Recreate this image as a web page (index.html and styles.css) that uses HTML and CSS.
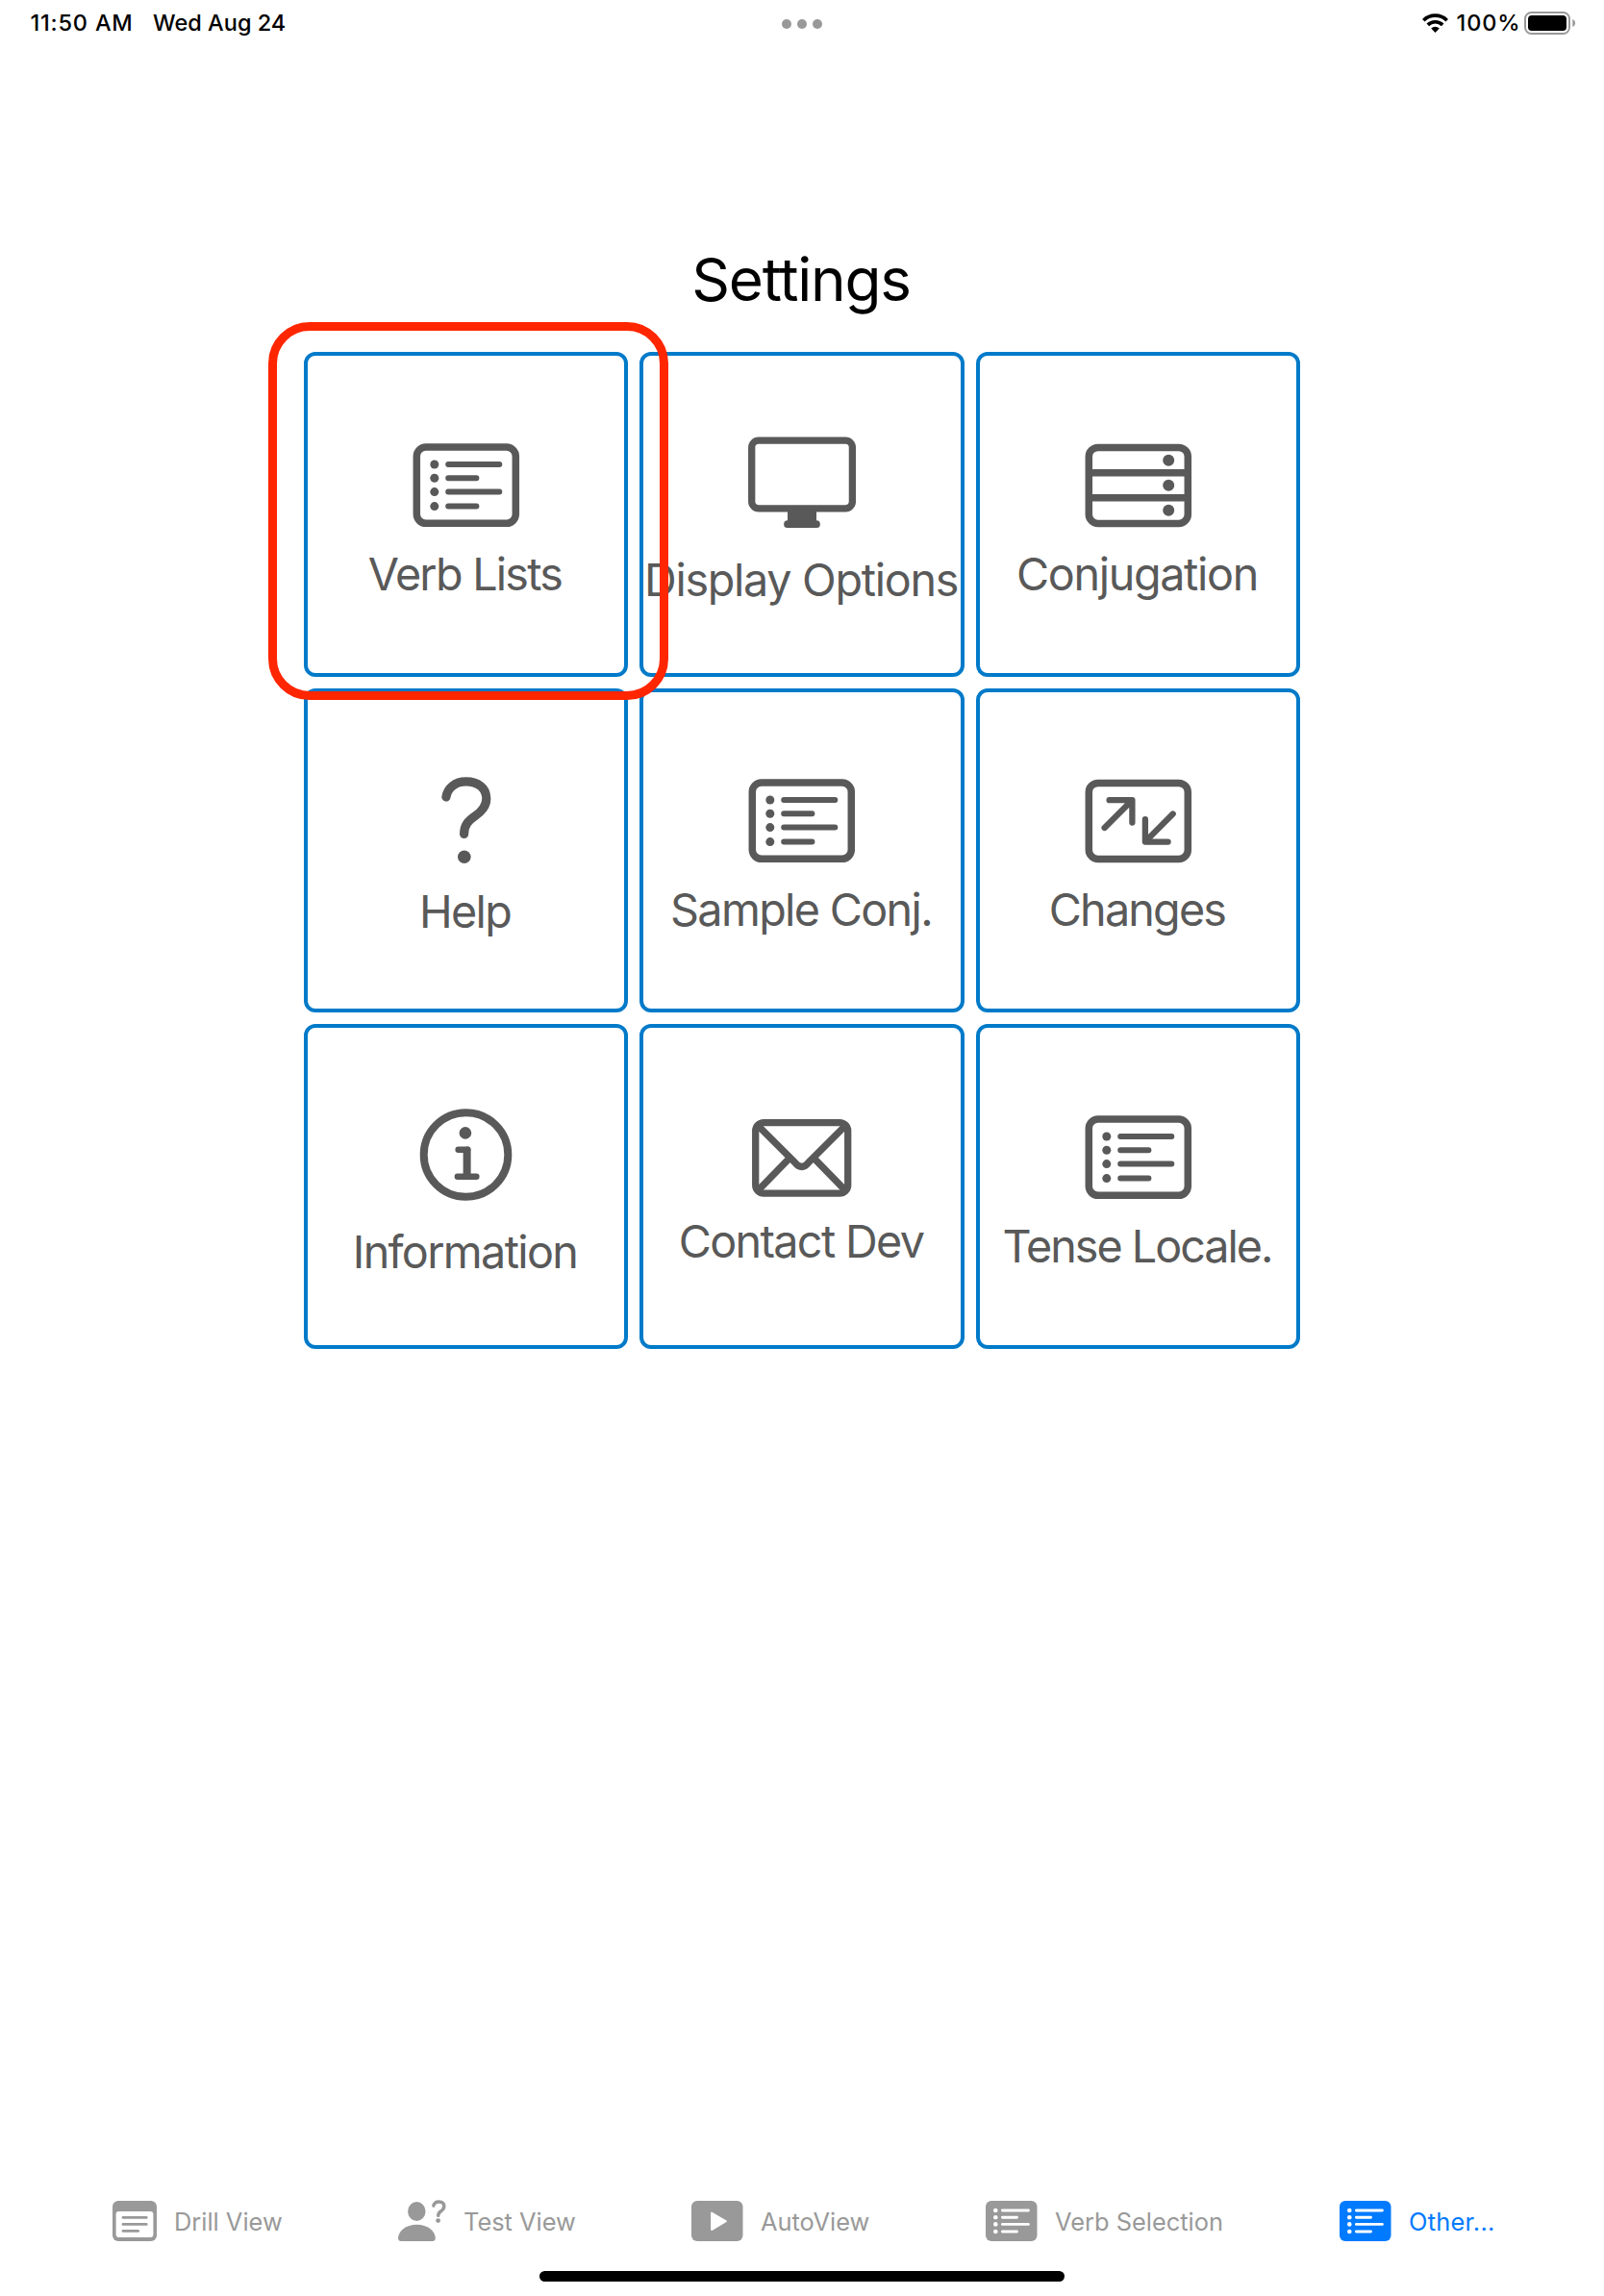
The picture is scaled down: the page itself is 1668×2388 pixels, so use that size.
FILE: index.html
```html
<!DOCTYPE html>
<html lang="en">
<head>
<meta charset="utf-8">
<title>Settings</title>
<link rel="stylesheet" href="styles.css">
</head>
<body>
<svg class="defs" width="0" height="0" aria-hidden="true">
  <symbol id="list" viewBox="0 0 120 120">
    <rect x="8.3" y="25.1" width="103" height="79.2" rx="9.5" fill="none" stroke="currentColor" stroke-width="7.5"/>
    <g fill="currentColor"><circle cx="26.8" cy="43" r="4.5"/><circle cx="26.8" cy="57.3" r="4.5"/><circle cx="26.8" cy="71.6" r="4.5"/><circle cx="26.8" cy="86.6" r="4.5"/></g>
    <path d="M41.2 43H94.3M41.2 57.3H70.4M41.2 71.6H94.3M41.2 86.6H70.4" stroke="currentColor" stroke-width="6" stroke-linecap="round"/>
  </symbol>
  <symbol id="tab-list" viewBox="0 0 54 42">
    <rect width="53.5" height="42" rx="6" fill="currentColor"/>
    <g fill="#fff"><circle cx="10.3" cy="10" r="2.3"/><circle cx="10.3" cy="17.2" r="2.3"/><circle cx="10.3" cy="24.4" r="2.3"/><circle cx="10.3" cy="32" r="2.3"/></g>
    <path d="M17.4 10H44.4M17.4 17.2H32.5M17.4 24.4H44.4M17.4 32H32.5" stroke="#fff" stroke-width="2.9" stroke-linecap="round"/>
  </symbol>
</svg>

<header class="status">
  <div class="status-left"><span class="time">11:50 AM</span><span class="date">Wed Aug 24</span></div>
  <div class="dots"><i></i><i></i><i></i></div>
  <div class="status-right">
    <svg class="wifi" width="27" height="20" viewBox="0 0 27 20">
      <g fill="none" stroke="#000" stroke-width="3.7">
        <path d="M1.3 7.2A17.4 17.4 0 0 1 25.7 7.2"/>
        <path d="M5.8 11.9A11 11 0 0 1 21.2 11.9"/>
      </g>
      <path d="M13.5 20L9.2 15.6A6.2 6.2 0 0 1 17.8 15.6Z"/>
    </svg>
    <span class="percent">100%</span>
    <svg class="battery" width="54" height="24" viewBox="0 0 54 24">
      <rect x="1" y="1" width="46" height="22" rx="6.5" fill="none" stroke="#999" stroke-width="2"/>
      <rect x="4" y="4" width="40" height="16" rx="3.8"/>
      <path d="M50.3 8C52.2 8.8 53.1 10.2 53.1 12S52.2 15.2 50.3 16Z" fill="#999"/>
    </svg>
  </div>
</header>

<main class="content">
  <h1 class="title">Settings</h1>
  <div class="grid">
    <div class="tile verb-lists">
      <svg class="icon" viewBox="0 0 120 120"><use href="#list"/></svg>
      <span class="label">Verb Lists</span>
    </div>
    <div class="tile display-options">
      <svg class="icon" viewBox="0 0 120 120">
        <rect x="7.7" y="18.1" width="104.7" height="70.7" rx="7.2" fill="none" stroke="currentColor" stroke-width="7.3"/>
        <path fill="currentColor" d="M45 91H75V101.3A3.8 3.8 0 0 1 75 109H45A3.8 3.8 0 0 1 45 101.3Z"/>
      </svg>
      <span class="label">Display Options</span>
    </div>
    <div class="tile conjugation">
      <svg class="icon" viewBox="0 0 120 120">
        <g fill="none" stroke="currentColor" stroke-width="7.5"><rect x="8.3" y="25.4" width="103" height="79" rx="9.5"/><path d="M8.3 51.7H111.3M8.3 77.7H111.3"/></g>
        <g fill="currentColor"><circle cx="91.2" cy="38.8" r="6"/><circle cx="91.2" cy="64.8" r="6"/><circle cx="91.2" cy="90.8" r="6"/></g>
      </svg>
      <span class="label">Conjugation</span>
    </div>

    <div class="tile raised help">
      <svg class="icon" viewBox="0 0 120 120">
        <path fill="none" stroke="currentColor" stroke-width="9.2" stroke-linecap="round" d="M38.9 39.9C40.5 30.5 48.5 23.9 59.5 23.9C72.5 23.9 80.8 31 80.8 41.7C80.8 50 76 55 69 59.8S57.6 69 57.6 78.4"/>
        <circle cx="57.8" cy="102.3" r="6.8" fill="currentColor"/>
      </svg>
      <span class="label">Help</span>
    </div>
    <div class="tile raised sample">
      <svg class="icon" viewBox="0 0 120 120"><use href="#list"/></svg>
      <span class="label">Sample Conj.</span>
    </div>
    <div class="tile raised changes">
      <svg class="icon" viewBox="0 0 120 120">
        <g fill="none" stroke="currentColor" stroke-linecap="round" stroke-linejoin="round">
          <rect x="8.3" y="25.4" width="103" height="79" rx="9.5" stroke-width="7.5"/>
          <path stroke-width="6.3" d="M24.6 72L53.3 43.3M29.6 43.2H53.4V66.6M95.7 57.5L67 86.4M66.9 63.2V86.6H90.6"/>
        </g>
      </svg>
      <span class="label">Changes</span>
    </div>

    <div class="tile information">
      <svg class="icon" viewBox="0 0 120 120">
        <g fill="none" stroke="currentColor"><circle cx="59.5" cy="62" r="43.8" stroke-width="8"/>
        <path d="M51.6 56.7H61.2M50.8 84.7H70.4" stroke-width="6.4" stroke-linecap="round"/><path d="M60.6 56.7V84.7" stroke-width="8"/></g>
        <path fill="currentColor" d="M60 53.5H61.4Q64.6 53.5 64.6 57H60Z"/>
        <circle cx="58.9" cy="39.4" r="6.3" fill="currentColor"/>
      </svg>
      <span class="label">Information</span>
    </div>
    <div class="tile contact">
      <svg class="icon" viewBox="0 0 120 120">
        <g fill="none" stroke="currentColor" stroke-width="7.3">
          <rect x="11.7" y="28.7" width="96" height="73.5" rx="8.5"/>
          <path d="M12.5 30L52.5 70Q59.7 79 66.9 70L106.9 30M13 100.5L45.6 67M106.4 100.5L73.8 67"/>
        </g>
      </svg>
      <span class="label">Contact Dev</span>
    </div>
    <div class="tile tense">
      <svg class="icon" viewBox="0 0 120 120"><use href="#list"/></svg>
      <span class="label">Tense Locale.</span>
    </div>
    <div class="highlight"></div>
  </div>
</main>

<nav class="tabs">
  <a class="tab drill">
    <svg width="46" height="42" viewBox="0 0 46 42">
      <rect width="46" height="42" rx="6" fill="currentColor"/>
      <rect x="3.6" y="11" width="38.8" height="27" rx="3" fill="#fff"/>
      <path d="M10.9 17.4H35.3M10.9 24.4H35.3M10.9 31.4H26.7" stroke="currentColor" stroke-width="2.7" stroke-linecap="round"/>
    </svg>
    <span>Drill View</span>
  </a>
  <a class="tab test">
    <svg width="50" height="42" viewBox="0 0 50 42">
      <ellipse cx="19.3" cy="11" rx="9.2" ry="10" fill="currentColor"/>
      <path fill="currentColor" d="M3 42Q0 42 0 38.6C0.4 31.5 8 24.8 19.4 24.8S38.4 31.5 38.8 38.6Q38.8 42 35.8 42Z"/>
      <path fill="none" stroke="currentColor" stroke-width="3.4" stroke-linecap="round" d="M36.8 5.2C37.4 2.3 39.6 1 42.4 1C45.8 1 47.8 2.8 47.8 5.8C47.8 8.6 46.2 9.8 44 11.2S41.7 13.4 41.7 15.4"/>
      <circle cx="41.6" cy="20.6" r="2.4" fill="currentColor"/>
    </svg>
    <span>Test View</span>
  </a>
  <a class="tab auto">
    <svg width="54" height="42" viewBox="0 0 54 42">
      <rect width="53.5" height="42" rx="6" fill="currentColor"/>
      <path d="M21 12.4V30.1L36 21.3Z" fill="#fff" stroke="#fff" stroke-width="1.8" stroke-linejoin="round"/>
    </svg>
    <span>AutoView</span>
  </a>
  <a class="tab verbs">
    <svg width="54" height="42" viewBox="0 0 54 42"><use href="#tab-list"/></svg>
    <span>Verb Selection</span>
  </a>
  <a class="tab other active">
    <svg width="54" height="42" viewBox="0 0 54 42"><use href="#tab-list"/></svg>
    <span>Other...</span>
  </a>
</nav>
<div class="home-indicator"></div>
</body>
</html>
```
FILE: styles.css
```css
* { box-sizing: border-box; }

body {
  margin: 0;
  height: 2388px;
  display: flex;
  flex-direction: column;
  background: #fff;
  color: #000;
  font-family: Inter, "Liberation Sans", sans-serif;
}

svg { display: block; overflow: visible; flex: none; }
.defs { position: absolute; }

/* Status bar */
.status {
  height: 48px;
  padding: 0 29.5px 0 31.5px;
  display: grid;
  grid-template-columns: 1fr 45px 1fr;
  align-items: center;
  font-size: 23.5px;
  font-weight: 500;
  line-height: 28px;
  white-space: nowrap;
}
.status-left { display: flex; gap: 20.5px; }
.time { letter-spacing: .8px; }
.date { letter-spacing: 0; }
.percent { letter-spacing: .87px; }
.dots { display: flex; justify-content: center; gap: 6px; padding: 2px 3px 0 0; }
.dots i { width: 10px; height: 10px; flex: none; border-radius: 50%; background: #999; }
.status-right { display: flex; justify-content: flex-end; align-items: center; }
.wifi { margin-right: 8.5px; }
.battery { margin-left: 3px; }

/* Settings grid */
.content { flex: 1; padding-top: 205px; }
.title {
  margin: 0 0 37px;
  padding-right: 2px;
  font-size: 62px;
  font-weight: 400;
  line-height: 76px;
  letter-spacing: -1.24px;
  text-align: center;
}
.grid {
  position: relative;
  width: 1036px;
  margin: 0 auto;
  display: grid;
  grid-template-columns: 337px 338px 337px;
  grid-template-rows: 338px 337px 338px;
  gap: 12px;
}
.tile {
  display: flex;
  flex-direction: column;
  align-items: center;
  padding-top: 70px;
  border: 4px solid #007ac9;
  border-radius: 12px;
  color: #595959;
}
.raised { padding-top: 69px; }
.icon { width: 120px; height: 120px; }
.label {
  margin-top: 9px;
  padding-right: 2px;
  font-size: 46.7px;
  line-height: 56px;
  letter-spacing: -1.65px;
  white-space: nowrap;
}
.verb-lists .label { letter-spacing: -1.75px; }
.display-options .label { margin-top: 15px; letter-spacing: -1.3px; }
.conjugation .label { letter-spacing: -1.35px; }
.help .label { margin-top: 11px; }
.changes .label { letter-spacing: -1.8px; }
.information .label { margin-top: 15px; }
.contact .label { margin-top: 4px; }
.tense .label { letter-spacing: -2px; }

.highlight {
  position: absolute;
  left: -37.5px;
  top: -31px;
  width: 416px;
  height: 393px;
  border: 9px solid #ff2600;
  border-radius: 43px;
}

/* Tab bar */
.tabs {
  height: 42px;
  padding-left: 117px;
  display: grid;
  grid-template-columns: 297px 305px 306px 368px 1fr;
  color: #999;
}
.tab {
  display: flex;
  align-items: center;
  gap: 18px;
  font-size: 25.4px;
  line-height: 32px;
  white-space: nowrap;
}
.tab span { padding-top: 1px; }
.active { color: #007aff; }
.other span { letter-spacing: .27px; }

.home-indicator {
  width: 546px;
  height: 11px;
  margin: 31px auto 15px;
  border-radius: 6px;
  background: #000;
}
```
